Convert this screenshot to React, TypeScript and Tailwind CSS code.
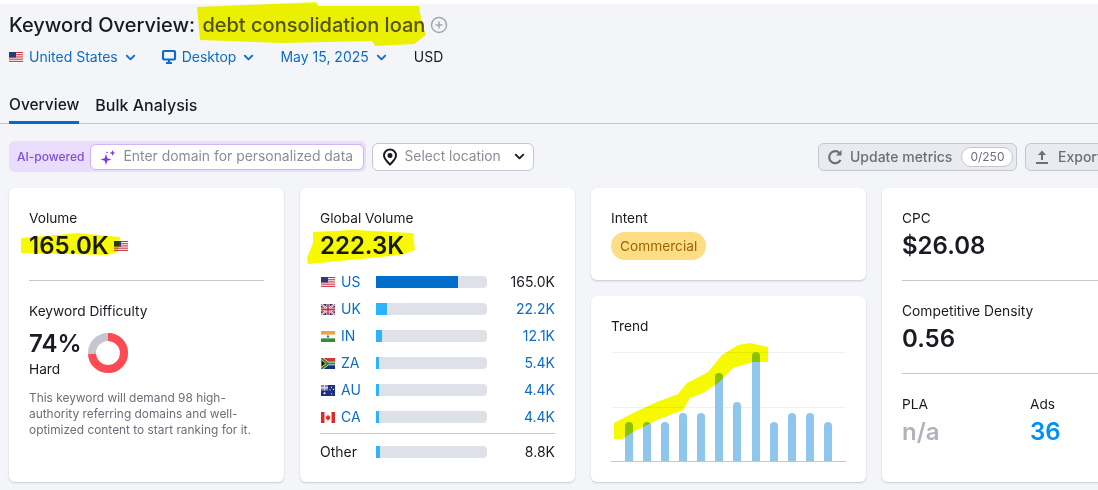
import { ChevronDown, CirclePlus } from 'lucide-react'

const flagProps = { width: 14, height: 11, viewBox: '0 0 14 10', preserveAspectRatio: 'none', className: 'shrink-0' }

const UsFlag = () => (
  <svg {...flagProps}>
    <rect width="14" height="10" fill="#fff" />
    {[0, 2, 4, 6, 8].map((y) => (
      <rect key={y} y={y} width="14" height="1" fill="#c8313e" />
    ))}
    <rect width="7" height="5" fill="#2b3a78" />
  </svg>
)

const UkFlag = () => (
  <svg {...flagProps}>
    <rect width="14" height="10" fill="#27387f" />
    <path d="M0 0 14 10M14 0 0 10" stroke="#fff" strokeWidth="2" />
    <path d="M0 0 14 10M14 0 0 10" stroke="#c8313e" strokeWidth="0.7" />
    <path d="M7 0V10M0 5H14" stroke="#fff" strokeWidth="3" />
    <path d="M7 0V10M0 5H14" stroke="#c8313e" strokeWidth="1.6" />
  </svg>
)

const InFlag = () => (
  <svg {...flagProps}>
    <rect width="14" height="10" fill="#fff" />
    <rect width="14" height="3.3" fill="#f0a14a" />
    <rect y="6.7" width="14" height="3.3" fill="#2f8f3a" />
    <circle cx="7" cy="5" r="1.2" fill="#5a6aa8" />
  </svg>
)

const ZaFlag = () => (
  <svg {...flagProps}>
    <rect width="14" height="5" fill="#d1392f" />
    <rect y="5" width="14" height="5" fill="#1c2f80" />
    <path d="M0 0 7 5 0 10M7 5H14" fill="none" stroke="#fff" strokeWidth="3" />
    <path d="M0 0 7 5 0 10M7 5H14" fill="none" stroke="#1f8a4c" strokeWidth="2" />
    <path d="M0 1.500 5 5 0 8.500Z" fill="#1a1a1a" stroke="#f2c230" strokeWidth="0.8" />
  </svg>
)

const AuFlag = () => (
  <svg {...flagProps}>
    <rect width="14" height="10" fill="#1c2f80" />
    <rect width="7" height="5" fill="#7c84b4" />
    <path d="M3.500 0V5M0 2.500H7" stroke="#e8d0d4" strokeWidth="1.200" />
    <circle cx="3.500" cy="7.500" r="1" fill="#fff" />
    <circle cx="10.500" cy="2" r="0.600" fill="#fff" />
    <circle cx="12.500" cy="4" r="0.600" fill="#fff" />
    <circle cx="9" cy="4.500" r="0.600" fill="#fff" />
    <circle cx="10.500" cy="8" r="0.600" fill="#fff" />
  </svg>
)

const CaFlag = () => (
  <svg {...flagProps}>
    <rect width="14" height="10" fill="#fff" />
    <rect width="3.500" height="10" fill="#d92b2b" />
    <rect x="10.500" width="3.500" height="10" fill="#d92b2b" />
    <path d="M7 2 8 4 9.300 3.600 8.900 5.600 9.600 6 7.300 7.200V8.400H6.700V7.200L4.400 6 5.100 5.600 4.700 3.600 6 4Z" fill="#d92b2b" />
  </svg>
)

const countries = [
  { code: 'US', flag: <UsFlag />, width: 82, value: '165.0K', active: true },
  { code: 'UK', flag: <UkFlag />, width: 11, value: '22.2K', active: false },
  { code: 'IN', flag: <InFlag />, width: 6, value: '12.1K', active: false },
  { code: 'ZA', flag: <ZaFlag />, width: 3, value: '5.4K', active: false },
  { code: 'AU', flag: <AuFlag />, width: 3, value: '4.4K', active: false },
  { code: 'CA', flag: <CaFlag />, width: 3, value: '4.4K', active: false },
]

const trend = [39, 39, 39, 48, 48, 88, 59, 109, 39, 48, 48, 39]

const Bar = ({ width, dark }: { width: number; dark?: boolean }) => (
  <div className="h-3 w-[111px] rounded-r-sm bg-[#dfe1e8]">
    <div className={`h-3 ${dark ? 'bg-[#006dca]' : 'bg-[#2bb3ff]'}`} style={{ width }} />
  </div>
)

const Card = ({ className, children }: { className: string; children: React.ReactNode }) => (
  <div className={`rounded-md bg-white shadow-[0_1px_2px_rgba(25,27,35,0.2)] ${className}`}>{children}</div>
)

const Highlights = () => (
  <svg
    className="pointer-events-none absolute left-0 top-0 mix-blend-multiply"
    width="1098"
    height="490"
    viewBox="0 0 1098 490"
    fill="#f6f900"
  >
    <path d="M197 7 246 5 316 2 318 6 419 6 421 18 426 35 414 44 375 46 372 41 281 43 200 40Z" />
    <path d="M21 238 57 235 77 233 120 237 118 252 107 255 27 253 21 253Z" />
    <path d="M313 232 353 230 413 233 415 250 400 255 350 260 308 264 307 258 313 243Z" />
    <path d="M614 423 635 412 657 402 678 394 687 383 697 378 708 372 722 355 738 345 750 343 768 347 768 362 753 362 733 368 718 383 703 393 690 398 683 410 657 420 633 432 622 439 614 439Z" />
  </svg>
)

export default function App() {
  return (
    <div className="relative h-[490px] w-[1098px] overflow-hidden bg-[#f4f5f9] font-['Inter',sans-serif] text-[#191b23]">
      <div className="h-1 bg-white" />
      <div className="w-[1157px] pl-[9px]">
        <div className="mt-[7px] flex h-7 items-center gap-[3px] text-xl font-medium">
          <h1 className="whitespace-pre">
            Keyword Overview: <span className="ml-[2px] text-[#555500]">debt consolidation loan</span>
          </h1>
          <CirclePlus size={18} className="ml-[2px] text-[#a4a7b2]" />
        </div>

        <div className="mt-[6px] flex h-6 items-center text-sm text-[#0a6dc6]">
          <UsFlag />
          <span className="ml-[6px]">United States</span>
          <ChevronDown size={15} strokeWidth={3} className="ml-[5px]" />
          <svg width="16" height="16" viewBox="0 0 16 16" className="ml-[23px]" fill="none" stroke="currentColor" strokeWidth="2.2">
            <rect x="2" y="2" width="12" height="8.500" rx="1" />
            <path d="M8 11v3M5 14h6" />
          </svg>
          <span className="ml-[5px]">Desktop</span>
          <ChevronDown size={15} strokeWidth={3} className="ml-[5px]" />
          <span className="ml-[24px]">May 15, 2025</span>
          <ChevronDown size={15} strokeWidth={3} className="ml-[5px]" />
          <span className="ml-[25px] text-[#191b23]">USD</span>
        </div>
      </div>

      <div className="mt-[24px] flex h-[31px] gap-4 border-b border-[#c4c7cf] pl-[9px] text-[15.5px] font-medium">
        <div className="h-[31px] border-b-[3px] border-[#006dca]">Overview</div>
        <div className="text-base">Bulk Analysis</div>
      </div>

      <div className="mt-[17px] flex w-[1157px] items-center justify-between pl-[9px]">
        <div className="flex items-center gap-[6px]">
          <div className="flex h-[31px] items-center gap-[6px] rounded-md bg-[#eadcfd] pl-2 pr-[2px] text-xs font-medium text-[#7f4ecf]">
            AI-powered
            <div className="flex h-[26px] w-[274px] items-center gap-[6px] rounded-md border border-[#d1b3f7] bg-white pl-[9px] text-[13.9px] font-normal text-[#8b8e99]">
              <svg width="17" height="16" viewBox="0 0 17 16" fill="#7f35e0">
                <path d="M6 5 7.300 9.200 11.500 10.500 7.300 11.800 6 16 4.700 11.800 0.500 10.500 4.700 9.200Z" />
                <path d="M12.500 1 13.300 3.200 15.500 4 13.300 4.800 12.500 7 11.700 4.800 9.500 4 11.700 3.200Z" />
                <circle cx="7" cy="3.500" r="0.800" />
              </svg>
              Enter domain for personalized data
            </div>
          </div>
          <div className="flex h-7 w-[162px] items-center rounded-md border border-[#c4c7cf] bg-white pl-[9px] text-[13.8px] text-[#8b8e99]">
            <svg width="16" height="18" viewBox="0 0 16 18" fill="none" stroke="#191b23" strokeWidth="2">
              <path d="M8 16.500C5 13.500 2 11 2 7.500a6 6 0 0 1 12 0C14 11 11 13.500 8 16.500Z" />
              <circle cx="8" cy="7.500" r="1.500" fill="#191b23" />
            </svg>
            <span className="ml-[6px]">Select location</span>
            <ChevronDown size={15} strokeWidth={3} className="ml-[11px] text-[#191b23]" />
          </div>
        </div>
        <div className="flex items-center gap-2 text-sm font-medium text-[#6c6e79]">
          <div className="flex h-7 w-[199px] items-center rounded-md border border-[#c4c7cf] bg-[#e9ebf0] pl-[8px]">
            <svg width="16" height="16" viewBox="0 0 16 16" fill="none" stroke="currentColor" strokeWidth="2.2">
              <path d="M13.500 11a6 6 0 1 1-1-7" />
              <path d="M14.500 1v5.500h-5.500Z" fill="currentColor" stroke="none" />
            </svg>
            <span className="ml-[7px]">Update metrics</span>
            <span className="ml-[9px] rounded-full border border-[#c4c7cf] bg-white px-2 text-xs font-normal leading-[18px]">0/250</span>
          </div>
          <div className="flex h-7 w-[132px] items-center rounded-md border border-[#c4c7cf] bg-[#e9ebf0] pl-[8px]">
            <svg width="16" height="16" viewBox="0 0 16 16" fill="none" stroke="currentColor" strokeWidth="2">
              <path d="M8 11V5M2 14h12" />
              <path d="M8 1.500 12 6H4Z" fill="currentColor" stroke="none" />
            </svg>
            <span className="ml-[8px]">Export</span>
          </div>
        </div>
      </div>

      <div className="mt-4 grid w-[1157px] grid-cols-[275px_275px_275px_275px] gap-4 pl-[9px]">
        <Card className="h-[294px] px-5 pt-[21px]">
          <div className="text-[13.7px] leading-[18px]">Volume</div>
          <div className="mt-[5px] flex items-center gap-[5px] text-2xl font-semibold leading-[28px]">
            165.0K <UsFlag />
          </div>
          <div className="mt-[20px] border-t border-[#c4c7cf]" />
          <div className="mt-[21px] text-[13.7px] leading-[18px]">Keyword Difficulty</div>
          <div className="mt-[10px] flex items-start">
            <div>
              <div className="text-2xl font-semibold leading-[28px]">74%</div>
              <div className="mt-[2px] text-[13.7px] leading-[18px]">Hard</div>
            </div>
            <svg width="40" height="40" viewBox="0 0 40 40" className="ml-[6px] mt-[3px]" fill="none" strokeWidth="8">
              <circle cx="20" cy="20" r="16" stroke="#c4c7cf" />
              <circle cx="20" cy="20" r="16" stroke="#ff4953" pathLength="100" strokeDasharray="74 100" transform="rotate(-90 20 20)" />
            </svg>
          </div>
          <p className="mt-[12px] text-[11.9px] leading-4 text-[#6c6e79]">
            This keyword will demand 98 high-authority referring domains and well-optimized content to start ranking for it.
          </p>
        </Card>

        <Card className="h-[294px] px-5 pt-[21px]">
          <div className="text-[13.7px] leading-[18px]">Global Volume</div>
          <div className="mt-[5px] text-2xl font-semibold leading-[28px]">222.3K</div>
          <div className="mt-[13px] flex flex-col gap-[9px]">
            {countries.map((c) => (
              <div key={c.code} className="flex h-[18px] items-center text-sm">
                <span className="ml-px">{c.flag}</span>
                <span className="ml-[6px] w-[35px] text-[#0a6dc6]">{c.code}</span>
                <Bar width={c.width} dark={c.active} />
                <span className={`ml-auto ${c.active ? '' : 'text-[#0a6dc6]'}`}>{c.value}</span>
              </div>
            ))}
          </div>
          <div className="mt-[7px] border-t border-[#c4c7cf]" />
          <div className="mt-[9px] flex h-[18px] items-center text-sm">
            <span className="w-[56px]">Other</span>
            <Bar width={4} />
            <span className="ml-auto">8.8K</span>
          </div>
        </Card>

        <div className="flex flex-col gap-4">
          <Card className="h-[92px] px-5 pt-[21px]">
            <div className="text-[13.7px] leading-[18px]">Intent</div>
            <div className="mt-[5px] w-fit rounded-full bg-[#ffdd85] px-[9px] text-[13.7px] leading-[28px] text-[#9a6500]">Commercial</div>
          </Card>
          <Card className="h-[186px] px-5 pt-[21px]">
            <div className="text-[13.7px] leading-[18px]">Trend</div>
            <div className="relative mt-[17px] flex h-[110px] items-end justify-between border-b border-[#c4c7cf] px-[14px]">
              <div className="absolute inset-x-0 top-0 border-t border-[#f0f1f4]" />
              <div className="absolute inset-x-0 top-[55px] border-t border-[#f0f1f4]" />
              {trend.map((h, i) => (
                <div key={i} className="relative w-2 rounded-t-sm bg-[#8fc6ee]" style={{ height: h }} />
              ))}
            </div>
          </Card>
        </div>

        <Card className="h-[294px] px-5 pt-[21px]">
          <div className="text-[13.7px] leading-[18px]">CPC</div>
          <div className="mt-[5px] text-2xl font-semibold leading-[28px]">$26.08</div>
          <div className="mt-[20px] border-t border-[#c4c7cf]" />
          <div className="mt-[21px] text-[13.8px] leading-[18px]">Competitive Density</div>
          <div className="mt-[5px] text-2xl font-semibold leading-[28px]">0.56</div>
          <div className="mt-[20px] border-t border-[#c4c7cf]" />
          <div className="mt-[21px] flex">
            <div className="w-[128px]">
              <div className="text-[13.7px] leading-[18px]">PLA</div>
              <div className="mt-[5px] text-2xl font-semibold leading-[28px] text-[#b0b3bd]">n/a</div>
            </div>
            <div>
              <div className="text-[13.7px] leading-[18px]">Ads</div>
              <div className="mt-[5px] text-2xl font-semibold leading-[28px] text-[#008ff8]">36</div>
            </div>
          </div>
        </Card>
      </div>

      <Highlights />
    </div>
  )
}
